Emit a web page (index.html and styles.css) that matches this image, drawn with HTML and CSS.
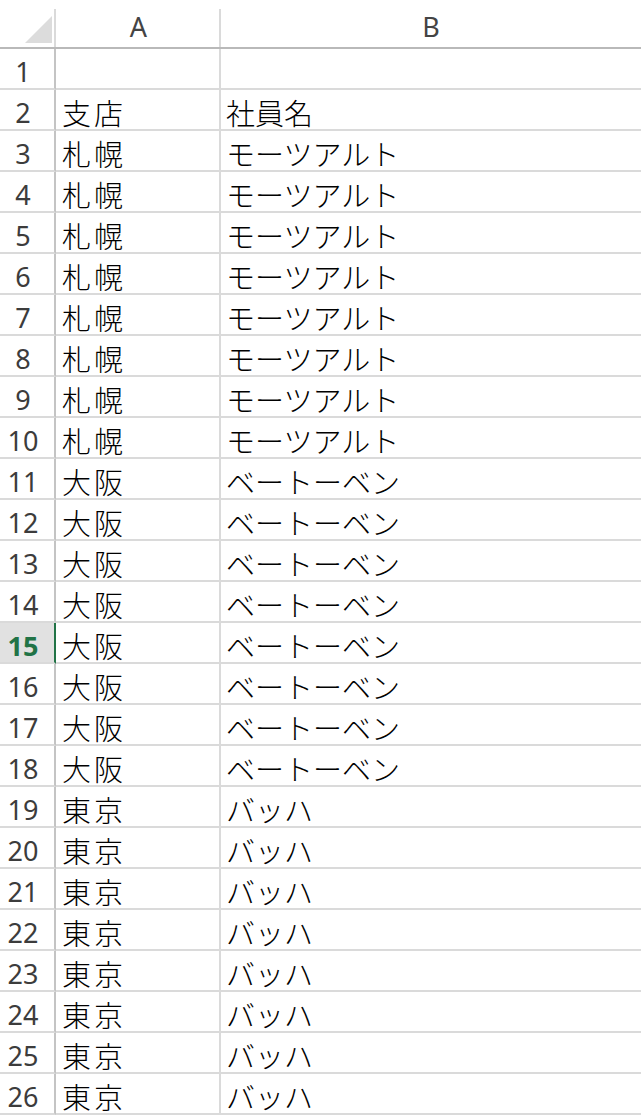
FILE: index.html
```html
<!DOCTYPE html>
<html lang="ja">
<head>
<meta charset="utf-8">
<title>Sheet</title>
<link rel="stylesheet" href="styles.css">
</head>
<body>
<div class="sheet">
  <div class="hdr corner"><div class="tri"></div></div>
  <div class="hdr col">A</div>
  <div class="hdr col last">B</div>

  <div class="rh">1</div><div class="c a"></div><div class="c b"></div>
  <div class="rh">2</div><div class="c a">支店</div><div class="c b">社員名</div>
  <div class="rh">3</div><div class="c a">札幌</div><div class="c b">モーツアルト</div>
  <div class="rh">4</div><div class="c a">札幌</div><div class="c b">モーツアルト</div>
  <div class="rh">5</div><div class="c a">札幌</div><div class="c b">モーツアルト</div>
  <div class="rh">6</div><div class="c a">札幌</div><div class="c b">モーツアルト</div>
  <div class="rh">7</div><div class="c a">札幌</div><div class="c b">モーツアルト</div>
  <div class="rh">8</div><div class="c a">札幌</div><div class="c b">モーツアルト</div>
  <div class="rh">9</div><div class="c a">札幌</div><div class="c b">モーツアルト</div>
  <div class="rh">10</div><div class="c a">札幌</div><div class="c b">モーツアルト</div>
  <div class="rh">11</div><div class="c a">大阪</div><div class="c b">ベートーベン</div>
  <div class="rh">12</div><div class="c a">大阪</div><div class="c b">ベートーベン</div>
  <div class="rh">13</div><div class="c a">大阪</div><div class="c b">ベートーベン</div>
  <div class="rh">14</div><div class="c a">大阪</div><div class="c b">ベートーベン</div>
  <div class="rh sel">15</div><div class="c a">大阪</div><div class="c b">ベートーベン</div>
  <div class="rh">16</div><div class="c a">大阪</div><div class="c b">ベートーベン</div>
  <div class="rh">17</div><div class="c a">大阪</div><div class="c b">ベートーベン</div>
  <div class="rh">18</div><div class="c a">大阪</div><div class="c b">ベートーベン</div>
  <div class="rh">19</div><div class="c a">東京</div><div class="c b">バッハ</div>
  <div class="rh">20</div><div class="c a">東京</div><div class="c b">バッハ</div>
  <div class="rh">21</div><div class="c a">東京</div><div class="c b">バッハ</div>
  <div class="rh">22</div><div class="c a">東京</div><div class="c b">バッハ</div>
  <div class="rh">23</div><div class="c a">東京</div><div class="c b">バッハ</div>
  <div class="rh">24</div><div class="c a">東京</div><div class="c b">バッハ</div>
  <div class="rh">25</div><div class="c a">東京</div><div class="c b">バッハ</div>
  <div class="rh">26</div><div class="c a">東京</div><div class="c b">バッハ</div>
</div>
</body>
</html>
```

FILE: styles.css
```css
html, body {
  margin: 0;
  padding: 0;
  background: #ffffff;
}

.sheet {
  width: 641px;
  display: grid;
  grid-template-columns: 56px 165px 1fr;
  grid-template-rows: 49px;
  grid-auto-rows: 41px;
  overflow: hidden;
}

.hdr {
  box-sizing: border-box;
  border-bottom: 2px solid #b9b9b9;
  background-color: #ffffff;
  background-image: linear-gradient(#dadada, #dadada);
  background-repeat: no-repeat;
  background-size: 2px 38px;
  background-position: right bottom;
}

.corner {
  display: flex;
  justify-content: flex-end;
  align-items: flex-end;
  padding: 0 4px 4px 0;
}

.tri {
  width: 27px;
  height: 27px;
  background: #dcdcdc;
  clip-path: polygon(100% 0, 100% 100%, 0 100%);
}

.col {
  display: flex;
  align-items: center;
  justify-content: center;
  padding-top: 6px;
  font-family: "Noto Sans", "Open Sans", sans-serif;
  font-size: 27px;
  color: #444444;
}

.col.last {
  background-image: none;
}

.rh {
  box-sizing: border-box;
  display: flex;
  align-items: center;
  justify-content: center;
  padding: 5px 8px 0 0;
  border-right: 2px solid #c4c4c4;
  border-bottom: 2px solid #dadada;
  font-family: "Noto Sans", "Open Sans", sans-serif;
  font-size: 27px;
  color: #3c3c3c;
}

.rh.sel {
  background: #e1e1e1;
  border-right-color: #217346;
  color: #217346;
  font-weight: bold;
}

.c {
  box-sizing: border-box;
  display: flex;
  align-items: center;
  padding-top: 5px;
  border-bottom: 2px solid #dadada;
  font-family: "Noto Sans CJK JP", sans-serif;
  font-size: 29px;
  font-weight: 300;
  color: #000000;
  white-space: nowrap;
}

.c.a {
  padding-left: 6px;
  letter-spacing: 3px;
  border-right: 2px solid #dadada;
}

.c.b {
  padding-left: 5px;
}
```
